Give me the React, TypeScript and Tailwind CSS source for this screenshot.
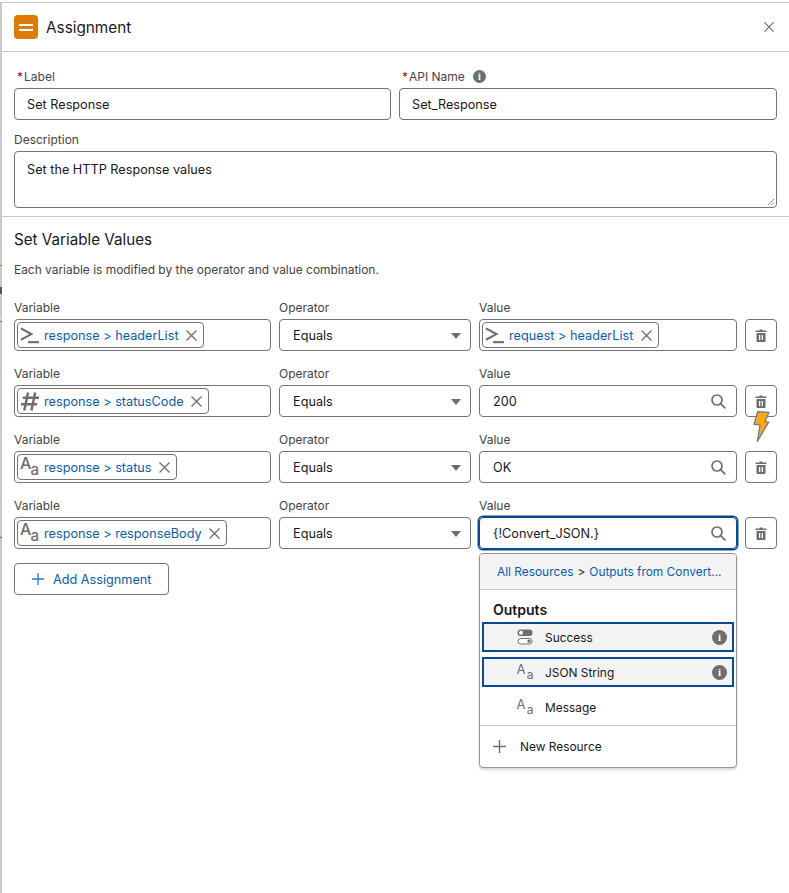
import React from "react";

function Terminal() {
  return (
    <svg viewBox="0 0 20 17" className="h-[17px] w-[19px]" fill="none" stroke="#6e6e6e" strokeWidth="2.2">
      <path d="M1 1 L12 7 L1 13" />
      <path d="M8.5 15.5 H20" />
    </svg>
  );
}
function Hash() {
  return (
    <svg viewBox="0 0 20 20" className="h-[20px] w-[19px]" fill="none" stroke="#6e6e6e" strokeWidth="2.6">
      <path d="M8.5 1 L4.5 20 M16 1 L12 20 M3 6.5 H20 M1 13.5 H18" />
    </svg>
  );
}
function TextIcon({ small }: { small?: boolean }) {
  return (
    <span className={small ? "relative block h-[16px] w-[17px] text-[#6e6e6e]" : "relative block h-[20px] w-[19px] font-medium text-[#6e6e6e]"}>
      <span className={small ? "absolute left-0 top-[-3px] text-[13px] leading-[16px]" : "absolute left-0 top-[-3px] text-[16px] leading-[18px]"}>A</span>
      <span className={small ? "absolute right-0 top-[4px] text-[12px] leading-[14px]" : "absolute right-0 top-[5px] text-[15px] leading-[16px]"}>a</span>
    </span>
  );
}
function Close({ className = "h-[11px] w-[11px]" }: { className?: string }) {
  return (
    <svg viewBox="0 0 11 11" className={className} fill="none" stroke="#6e6e6e" strokeWidth="1.3">
      <path d="M0.5 0.5 L10.5 10.5 M10.5 0.5 L0.5 10.5" />
    </svg>
  );
}
function Search() {
  return (
    <svg viewBox="0 0 15 15" className="h-[15px] w-[15px]" fill="none" stroke="#6e6e6e" strokeWidth="1.7">
      <circle cx="6" cy="6" r="5" />
      <path d="M9.6 9.6 L14.3 14.3" />
    </svg>
  );
}
function Trash() {
  return (
    <svg viewBox="0 0 12 13" className="h-[13px] w-[12px]" fill="#6e6e6e">
      <path d="M4.5 0.5 H7.5 V1.6 H11.5 V3 H0.5 V1.6 H4.5 Z" />
      <path fillRule="evenodd" d="M1.5 4 H10.5 V12 Q10.5 13 9.5 13 H2.5 Q1.5 13 1.5 12 Z M4 6 V11 H5.3 V6 Z M6.7 6 V11 H8 V6 Z" />
    </svg>
  );
}
function Info({ big }: { big?: boolean }) {
  return (
    <span className={big
      ? "flex h-[15px] w-[15px] items-center justify-center rounded-full bg-[#6e6e6e] font-['Liberation_Serif',serif] text-[11px] font-bold leading-none text-white"
      : "flex h-[13px] w-[13px] items-center justify-center rounded-full bg-[#6e6e6e] font-['Liberation_Serif',serif] text-[10px] font-bold leading-none text-white"}>i</span>
  );
}
function Toggle() {
  return (
    <svg viewBox="0 0 16 16" className="h-[16px] w-[16px]">
      <rect x="0.5" y="0.5" width="15" height="6.5" rx="3.2" fill="#6e6e6e" />
      <circle cx="4" cy="3.7" r="2" fill="#fff" />
      <rect x="1" y="9.5" width="14" height="5.5" rx="2.7" fill="#fff" stroke="#6e6e6e" />
      <circle cx="12" cy="12.2" r="1.6" fill="#6e6e6e" />
    </svg>
  );
}
function Plus({ className, color }: { className: string; color: string }) {
  return (
    <svg viewBox="0 0 14 14" className={className} fill="none" stroke={color} strokeWidth="1.5">
      <path d="M7 0 V14 M0 7 H14" />
    </svg>
  );
}

function Pill({ icon, text, width }: { icon: React.ReactNode; text: string; width: string }) {
  return (
    <div className={`flex h-[26px] items-center rounded-[4px] border border-[#747474] pl-[1px] ${width}`}>
      <span className="flex w-[21px] shrink-0 justify-center">{icon}</span>
      <span className="ml-[4px] whitespace-nowrap pt-[1px] text-[12.7px] text-[#0b5cab]">{text}</span>
      <span className="ml-auto mr-[6px]"><Close /></span>
    </div>
  );
}

function SelectBox() {
  return (
    <div className="flex h-[32px] items-center justify-between rounded-[4px] border border-[#747474] pl-[13px] pr-[9px] pt-[2px] text-[12.7px] text-[#181818]">
      Equals
      <span className="h-0 w-0 border-x-[5px] border-t-[6px] border-x-transparent border-t-[#6e6e6e]" />
    </div>
  );
}

function Row({ variable, value }: { variable: React.ReactNode; value: React.ReactNode }) {
  return (
    <div className="flex gap-[8px]">
      <div className="w-[257px]">
        <div className="h-[20px] text-[12px] leading-[18px] text-[#444444]">Variable</div>
        <div className="flex h-[32px] items-center rounded-[4px] border border-[#747474] px-[2px]">{variable}</div>
      </div>
      <div className="w-[192px]">
        <div className="h-[20px] text-[12px] leading-[18px] text-[#444444]">Operator</div>
        <SelectBox />
      </div>
      <div className="w-[258px]">
        <div className="h-[20px] text-[12px] leading-[18px] text-[#444444]">Value</div>
        {value}
      </div>
      <div className="pt-[20px]">
        <div className="flex h-[32px] w-[32px] items-center justify-center rounded-[4px] border border-[#747474]">
          <Trash />
        </div>
      </div>
    </div>
  );
}

function ValueInput({ text }: { text: string }) {
  return (
    <div className="flex h-[32px] items-center justify-between rounded-[4px] border border-[#747474] pl-[13px] pr-[10px] text-[12.7px] text-[#181818]">
      <span className="pt-[2px]">{text}</span>
      <Search />
    </div>
  );
}

function Option({ icon, text, info }: { icon: React.ReactNode; text: string; info?: boolean }) {
  return (
    <div className={`flex h-[30px] items-center ${info ? "border-2 border-[#0b4a91] bg-[#f3f3f3]" : "border-2 border-transparent"}`}>
      <span className="ml-[32px] flex w-[18px] justify-center">{icon}</span>
      <span className="ml-[11px] pt-[2px] text-[11.9px] text-[#181818]">{text}</span>
      {info && <span className="ml-auto mr-[5px]"><Info big /></span>}
    </div>
  );
}

export default function App() {
  return (
    <div className="relative h-[893px] w-[789px] bg-white pt-[2px] font-['Inter','Liberation_Sans',sans-serif]">
      <div className="h-[891px] border-l-2 border-t border-[#c9c9c9]">
        <header className="flex h-[49px] items-center justify-between border-b border-[#c9c9c9] pl-[12px] pr-[15px]">
          <div className="flex items-center gap-[8px]">
            <span className="flex h-[24px] w-[24px] flex-col items-center justify-center gap-[3px] rounded-[4px] bg-[#dd7a01]">
              <span className="h-[2px] w-[14px] bg-white" />
              <span className="h-[2px] w-[14px] bg-white" />
            </span>
            <span className="pt-[2px] text-[15.3px] text-[#181818]">Assignment</span>
          </div>
          <Close className="h-[10px] w-[10px]" />
        </header>

        <section className="border-b border-[#c9c9c9] px-[12px] pb-[8px] pt-[16px]">
          <div className="flex gap-[8px]">
            <div className="w-[377px]">
              <div className="h-[20px] text-[12px] leading-[18px] text-[#444444]"><span className="ml-[3px] mr-[1px] text-[#ba0517]">*</span>Label</div>
              <div className="flex h-[32px] items-center rounded-[4px] border border-[#747474] pl-[12px] pt-[2px] text-[12.7px] text-[#181818]">Set Response</div>
            </div>
            <div className="w-[378px]">
              <div className="flex h-[20px] items-start text-[12px] leading-[18px] text-[#444444]"><span className="ml-[3px] mr-[1px] text-[#ba0517]">*</span>API Name<span className="ml-[8px] mt-[2px]"><Info /></span></div>
              <div className="flex h-[32px] items-center rounded-[4px] border border-[#747474] pl-[12px] pt-[2px] text-[12.7px] text-[#181818]">Set_Response</div>
            </div>
          </div>
          <div className="mt-[11px] h-[20px] text-[12px] leading-[18px] text-[#444444]">Description</div>
          <div className="relative h-[57px] w-[763px] rounded-[4px] border border-[#747474] pl-[12px] pt-[9px] text-[12.7px] leading-[18px] text-[#181818]">
            Set the HTTP Response values
            <svg viewBox="0 0 8 8" className="absolute bottom-[1px] right-[1px] h-[8px] w-[8px]" stroke="#6e6e6e" strokeWidth="0.8"><path d="M1 7 L7 1 M4.5 7 L7 4.5" /></svg>
          </div>
        </section>

        <section className="px-[12px] pt-[13px]">
          <h2 className="text-[15.2px] leading-[20px] text-[#181818]">Set Variable Values</h2>
          <p className="mt-[12px] text-[11.93px] leading-[16px] text-[#444444]">Each variable is modified by the operator and value combination.</p>
          <div className="mt-[21px] flex flex-col gap-[14px]">
            <Row
              variable={<Pill icon={<Terminal />} text="response > headerList" width="w-[187px]" />}
              value={
                <div className="flex h-[32px] items-center rounded-[4px] border border-[#747474] px-[2px]">
                  <Pill icon={<Terminal />} text="request > headerList" width="w-[177px]" />
                </div>
              }
            />
            <Row
              variable={<Pill icon={<Hash />} text="response > statusCode" width="w-[192px]" />}
              value={<ValueInput text="200" />}
            />
            <Row
              variable={<Pill icon={<TextIcon />} text="response > status" width="w-[160px]" />}
              value={<ValueInput text="OK" />}
            />
            <div className="relative">
              <Row
                variable={<Pill icon={<TextIcon />} text="response > responseBody" width="w-[210px]" />}
                value={
                  <div className="flex h-[32px] items-center justify-between rounded-[4px] border border-[#0b4a91] pl-[13px] pr-[10px] text-[12.7px] text-[#181818] shadow-[0_0_0_1.5px_#0b4a91]">
                    <span className="pt-[2px]">{"{!Convert_JSON.}"}</span>
                    <Search />
                  </div>
                }
              />
              <div className="absolute left-[465px] top-[56px] w-[258px] overflow-hidden rounded-[4px] border border-[#939393] bg-white shadow-[0_2px_3px_rgba(0,0,0,0.16)]">
                <div className="flex h-[36px] items-center whitespace-nowrap border-b border-[#c9c9c9] bg-[#f3f3f3] pl-[17px] text-[11.9px]">
                  <span className="text-[#0b5cab]">All Resources</span>
                  <span className="mx-[4px] text-[#181818]">&gt;</span>
                  <span className="text-[#0b5cab]">Outputs from Convert...</span>
                </div>
                <div className="px-[2px] pt-[10px]">
                  <div className="h-[22px] pl-[11px] text-[14px] font-semibold leading-[20px] text-[#181818]">Outputs</div>
                  <Option icon={<Toggle />} text="Success" info />
                  <div className="h-[5px]" />
                  <Option icon={<TextIcon small />} text="JSON String" info />
                  <div className="h-[5px]" />
                  <Option icon={<TextIcon small />} text="Message" />
                </div>
                <div className="mt-[3px] flex h-[42px] items-center border-t border-[#c9c9c9] pl-[13px]">
                  <Plus className="h-[13px] w-[13px]" color="#6e6e6e" />
                  <span className="ml-[14px] pt-[1px] text-[11.9px] text-[#181818]">New Resource</span>
                </div>
              </div>
            </div>
          </div>
          <div className="mt-[14px] flex h-[32px] w-[155px] items-center gap-[9px] rounded-[4px] border border-[#747474] pl-[17px] text-[12.7px] text-[#0b5cab]">
            <Plus className="h-[12px] w-[12px]" color="#1b7fd6" />
            <span className="pt-[1px]">Add Assignment</span>
          </div>
        </section>
      </div>
      <span className="absolute left-0 top-[265px] h-[1px] w-[2px] bg-[#777777]" />
      <span className="absolute left-0 top-[287px] h-[7px] w-[2px] bg-[#555555]" />
      <span className="absolute left-0 top-[316px] h-[11px] w-[2px] bg-[#c5d5e8]" />
      <span className="absolute left-0 top-[321px] h-[1px] w-[2px] bg-[#2e6cb0]" />
      <span className="absolute left-0 top-[537px] h-[1px] w-[2px] bg-[#666666]" />
      <svg viewBox="0 0 17 33" className="absolute left-[753px] top-[410px] h-[33px] w-[17px]">
        <path d="M4.7 1.7 L16 2.3 L12 11.7 L15.8 12 L4.3 31.5 L7 15 L1 14.3 Z" fill="#f5a80f" stroke="#6c6f9c" strokeWidth="1.2" strokeLinejoin="round" />
      </svg>
    </div>
  );
}
